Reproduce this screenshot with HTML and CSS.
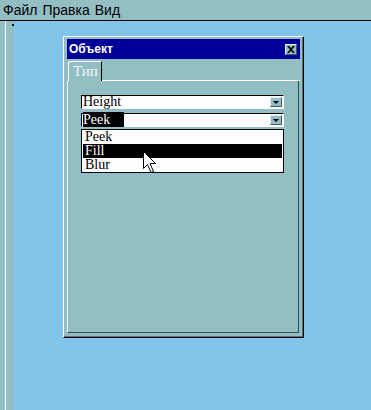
FILE: index.html
```html
<!DOCTYPE html>
<html>
<head>
	<meta charset="utf-8">
	<title>Объект</title>
	<link rel="stylesheet" href="styles.css">
</head>
<body>

    <div class="menubar">
        <span class="menu-item">Файл</span>
        <span class="menu-item">Правка</span>
        <span class="menu-item">Вид</span>
    </div>

    <div class="workspace">
        <div class="ruler"><span class="ruler-line"></span><span class="dot"></span></div>

        <div class="canvas">
            <div class="window">
                <div class="titlebar">
                    <span class="title">Объект</span>
                    <span class="close">
                        <svg width="8" height="7" viewBox="0 0 8 7">
                            <path d="M0 0h2l2 2 2-2h2L5 3.5 8 7H6L4 5 2 7H0l3-3.5z" fill="#000"/>
                        </svg>
                    </span>
                </div>

                <div class="tabs">
                    <span class="tab">Тип</span>
                    <span class="tab-rest"></span>
                </div>

                <div class="panel">
                    <div class="combo">
                        <span class="combo-text">Height</span>
                        <span class="combo-btn"><span class="arrow"></span></span>
                    </div>
                    <div class="combo">
                        <span class="combo-text"><span class="selected">Peek</span></span>
                        <span class="combo-btn"><span class="arrow"></span></span>
                    </div>
                    <ul class="dropdown">
                        <li>Peek</li>
                        <li class="active">Fill</li>
                        <li>Blur</li>
                    </ul>
                </div>
            </div>
        </div>
    </div>

    <svg class="cursor" width="14" height="23" viewBox="0 0 14 23">
        <path d="M0.5 0.5v17l4-4 3.5 8 2.5-1-3.5-8h5.5z" fill="#fff" stroke="#000" stroke-width="1"/>
    </svg>

</body>
</html>
```

FILE: styles.css
```css
body {
    margin: 0;
    width: 371px;
    height: 410px;
    overflow: hidden;
    background-color: #82c5ea;
    font-family: "Liberation Sans", Arial, sans-serif;
    position: relative;
}

.menubar {
    height: 20px;
    background-color: #93bec4;
    border-bottom: 1px solid #000;
    padding-left: 3px;
    display: flex;
    align-items: center;
    gap: 5px;
    font-size: 14px;
    color: #000;
}

.workspace {
    display: flex;
    height: 389px;
}

.ruler {
    width: 14px;
    background-color: #93bec4;
    position: relative;
    display: flex;
}

.ruler-line {
    margin-left: 5px;
    width: 1px;
    background-color: #fff;
}

.dot {
    position: absolute;
    left: 12px;
    top: 3px;
    width: 2px;
    height: 2px;
    background-color: #000;
}

.canvas {
    flex: 1;
    padding: 15px 0 0 49px;
}

.window {
    width: 233px;
    height: 294px;
    background-color: #93bec4;
    border: 1px solid;
    border-color: #fff #000 #000 #fff;
    box-shadow: inset -1px -1px #4e7479;
    padding: 2px 3px 4px 3px;
    display: flex;
    flex-direction: column;
}

.titlebar {
    height: 20px;
    background-color: #000099;
    display: flex;
    align-items: center;
    justify-content: space-between;
    padding: 0 3px 0 2px;
}

.title {
    color: #fff;
    font-weight: bold;
    font-size: 12px;
}

.close {
    width: 12px;
    height: 11px;
    background-color: #93bec4;
    border: 1px solid;
    border-color: #dfeef0 #3e5e62 #3e5e62 #dfeef0;
    box-sizing: border-box;
    display: flex;
    align-items: center;
    justify-content: center;
}

.tabs {
    display: flex;
    margin-top: 2px;
    height: 20px;
}

.tab {
    margin-left: 1px;
    width: 28px;
    padding-left: 4px;
    border: 1px solid;
    border-bottom: none;
    border-color: #fff #000 #000 #fff;
    border-radius: 3px 0 0 0;
    color: #eef6f6;
    font-family: "Liberation Serif", serif;
    font-size: 15px;
    line-height: 19px;
}

.tab-rest {
    flex: 1;
    border-bottom: 1px solid #fff;
}

.panel {
    flex: 1;
    border: 1px solid;
    border-top: none;
    border-color: #fff #2e4e54 #2e4e54 #fff;
    margin-right: 1px;
    padding: 14px 14px 0 13px;
    font-family: "Liberation Serif", serif;
    font-size: 14px;
}

.combo {
    height: 14px;
    box-sizing: border-box;
    border: 1px solid;
    border-color: #000 #fff #fff #000;
    background-color: #fff;
    display: flex;
    align-items: center;
    margin-bottom: 4px;
}

.combo-text {
    flex: 1;
    line-height: 12px;
    padding-left: 1px;
}

.selected {
    background-color: #000;
    color: #fff;
    padding-right: 14px;
}

.combo-btn {
    width: 12px;
    height: 10px;
    margin-right: 1px;
    box-sizing: border-box;
    background-color: #93bec4;
    border: 1px solid;
    border-color: #dfeef0 #3e5e62 #3e5e62 #dfeef0;
    display: flex;
    align-items: center;
    justify-content: center;
}

.arrow {
    width: 0;
    height: 0;
    border-left: 3px solid transparent;
    border-right: 3px solid transparent;
    border-top: 3px solid #000;
}

.dropdown {
    list-style: none;
    margin: -2px 0 0 0;
    padding: 0;
    border: 1px solid #000;
    background-color: #fff;
}

.dropdown li {
    height: 14px;
    line-height: 14px;
    padding-left: 2px;
    margin: 0 1px;
}

.dropdown li.active {
    background-color: #000;
    color: #fff;
}

.cursor {
    position: absolute;
    left: 143px;
    top: 151px;
}
```
